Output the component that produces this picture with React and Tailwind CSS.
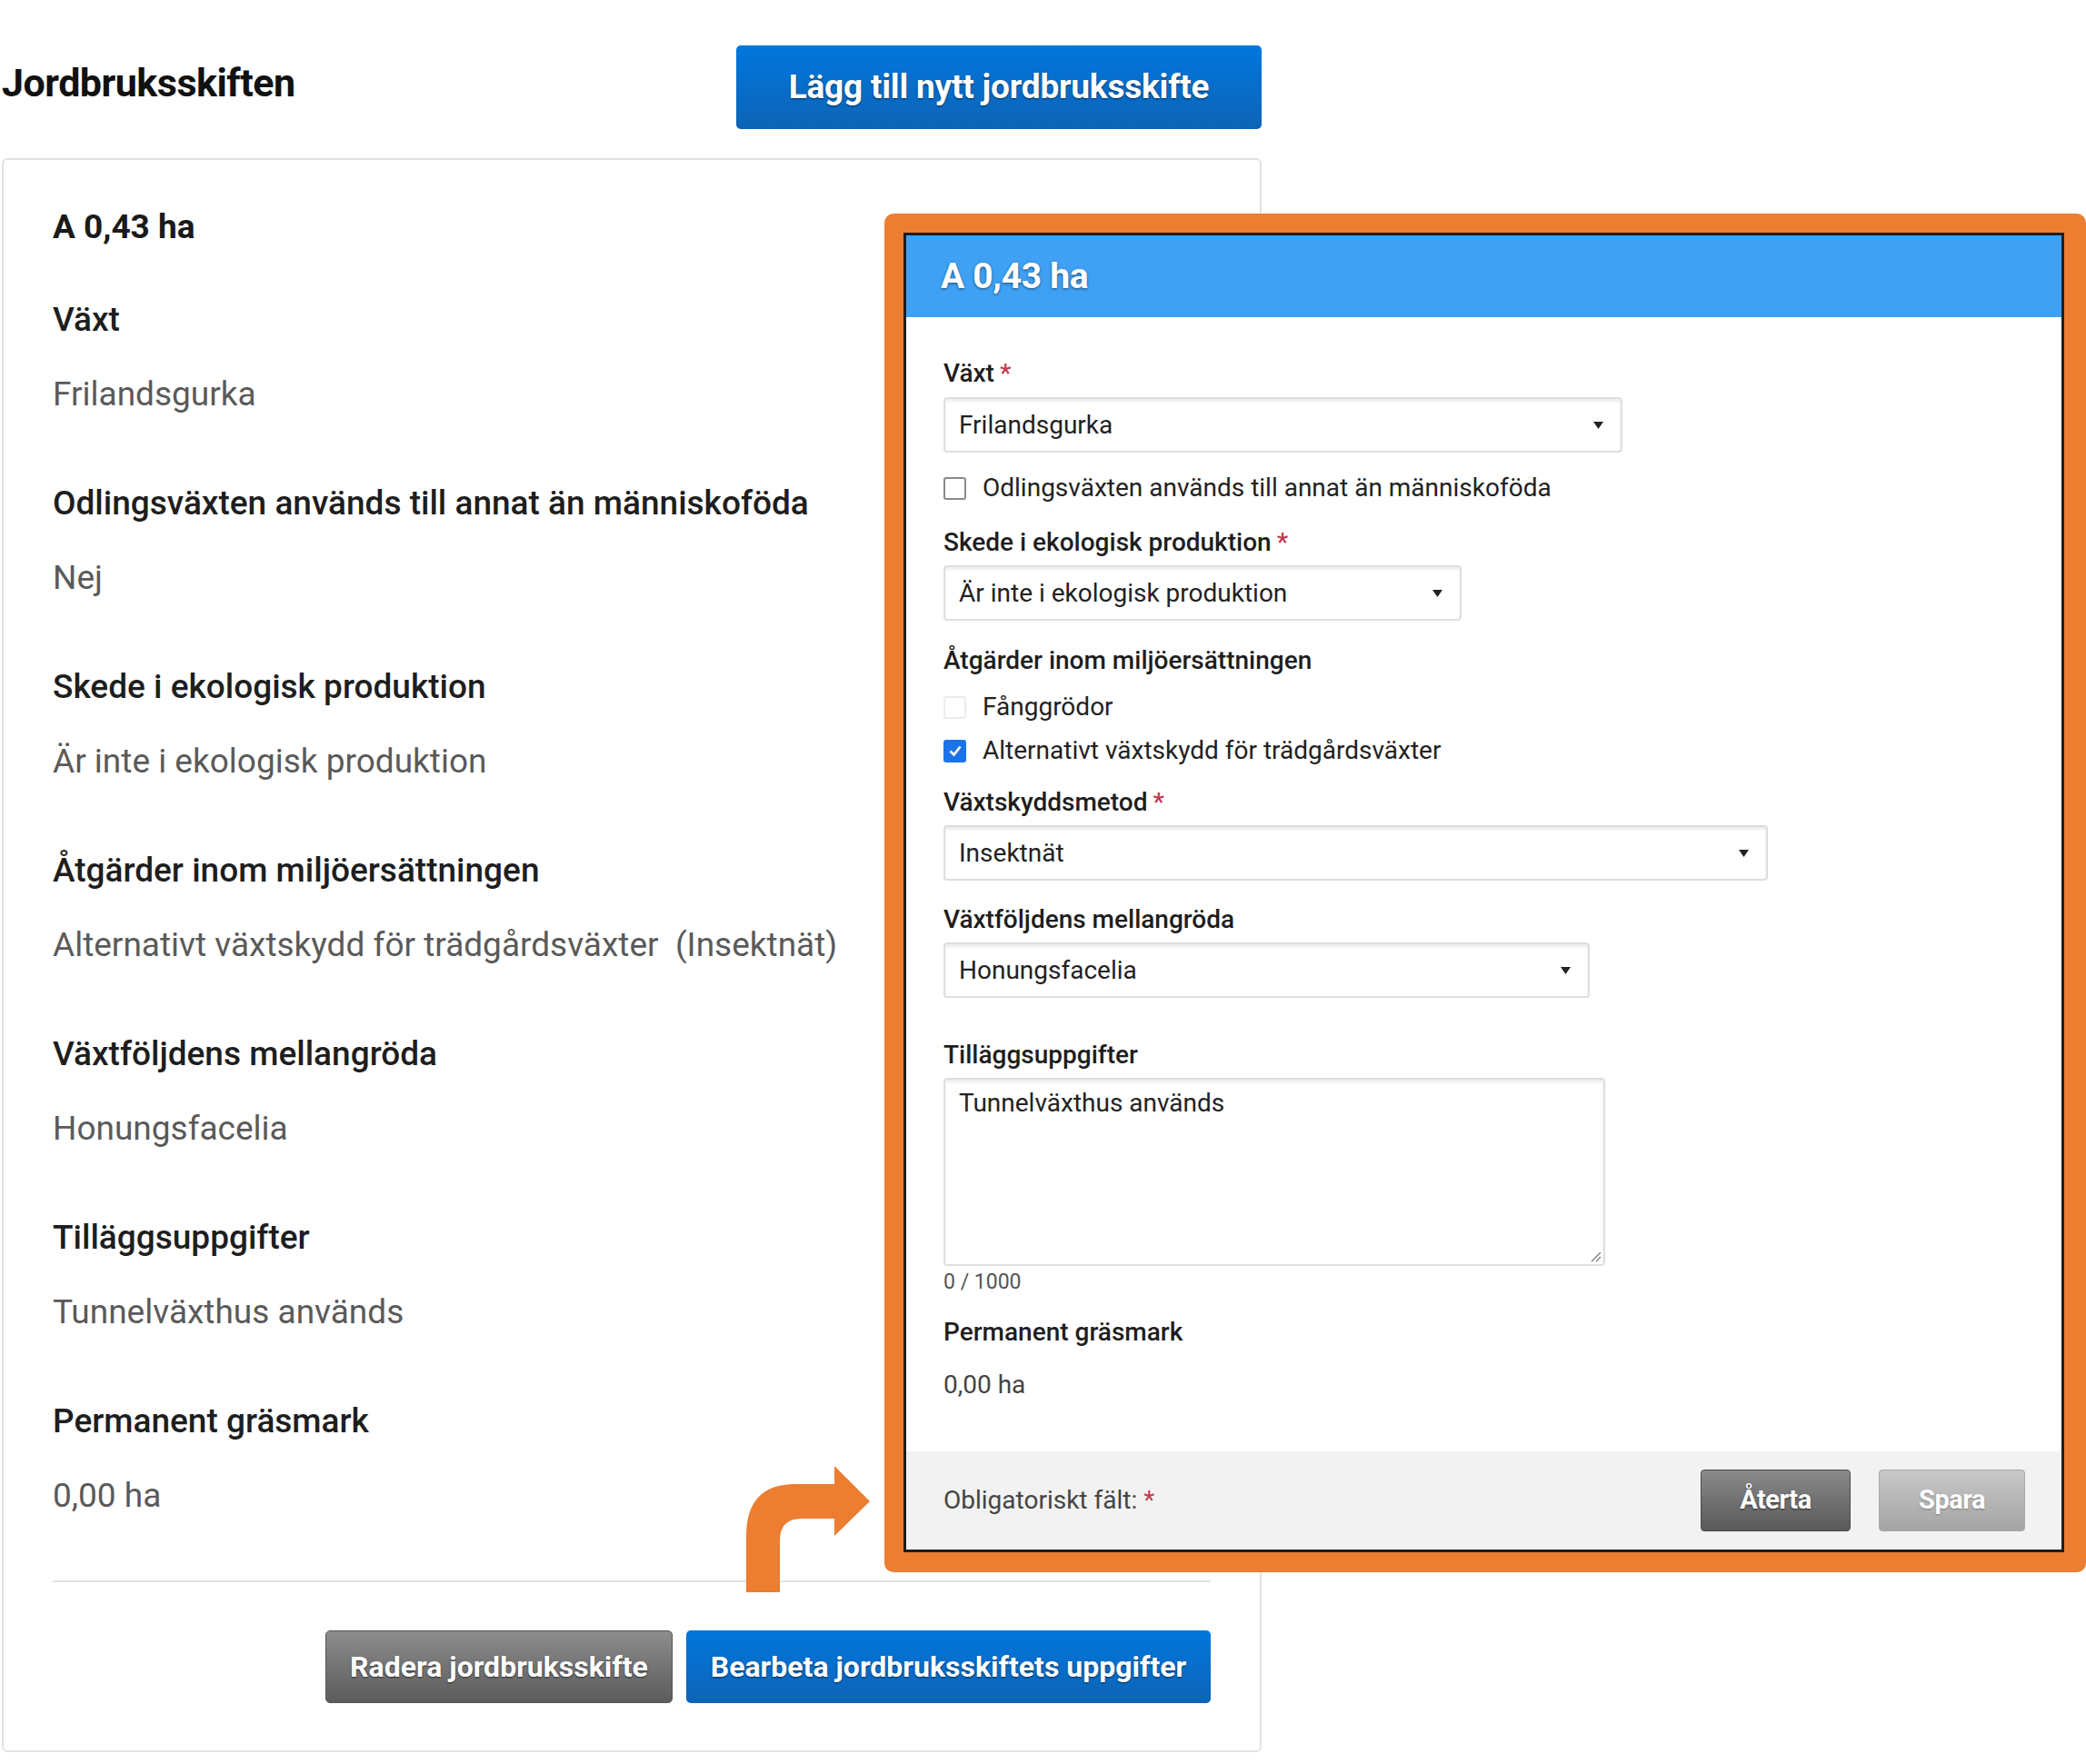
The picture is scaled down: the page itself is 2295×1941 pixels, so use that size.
import React from 'react'

const sections = [
  { label: 'Växt', value: 'Frilandsgurka' },
  { label: 'Odlingsväxten används till annat än människoföda', value: 'Nej' },
  { label: 'Skede i ekologisk produktion', value: 'Är inte i ekologisk produktion' },
  { label: 'Åtgärder inom miljöersättningen', value: 'Alternativt växtskydd för trädgårdsväxter\u00a0 (Insektnät)' },
  { label: 'Växtföljdens mellangröda', value: 'Honungsfacelia' },
  { label: 'Tilläggsuppgifter', value: 'Tunnelväxthus används' },
  { label: 'Permanent gräsmark', value: '0,00 ha' },
]

function Caret() {
  return (
    <svg width="11" height="8" viewBox="0 0 11 8" className="shrink-0">
      <path d="M0 0 L11 0 L5.5 8 Z" fill="#222" />
    </svg>
  )
}

function Select({ value, className }) {
  return (
    <div className={`flex h-[61px] items-center justify-between rounded-[4px] border-2 border-[#dedede] pl-[15px] pr-[19px] text-[28px] text-[#222] shadow-[inset_0_3px_3px_rgba(0,0,0,0.07)] ${className}`}>
      <span>{value}</span>
      <Caret />
    </div>
  )
}

function Label({ children, required, className = '' }) {
  return (
    <div className={`text-[28px] font-medium leading-[32px] text-[#1e1e1e] ${className}`}>
      {children}
      {required && <span className="ml-[6px] text-[#c0394f]">*</span>}
    </div>
  )
}

function Checkbox({ checked, disabled, label, className = '' }) {
  return (
    <div className={`flex h-[32px] items-center gap-[18px] ${className}`}>
      {checked ? (
        <div className="flex h-[25px] w-[25px] items-center justify-center rounded-[3px] bg-[#1a73e8]">
          <svg width="16" height="16" viewBox="0 0 16 16">
            <path d="M2.5 8.5 L6.5 12.5 L13.5 3.5" stroke="white" strokeWidth="2.6" fill="none" />
          </svg>
        </div>
      ) : (
        <div className={`h-[25px] w-[25px] rounded-[3px] border-2 ${disabled ? 'border-[#ececec]' : 'border-[#8a8a8a]'}`} />
      )}
      <span className="text-[28px] text-[#222]">{label}</span>
    </div>
  )
}

export default function App() {
  return (
    <div className="relative h-[1941px] w-[2295px] overflow-hidden bg-white font-['Roboto',sans-serif]">
      {/* vänster kolumn */}
      <div className="w-[1388px] pl-[2px]">
        <div className="flex items-center justify-between pt-[50px]">
          <h1 className="-mt-[9px] text-[43px] font-bold tracking-[-0.5px] text-[#111]">Jordbruksskiften</h1>
          <button className="h-[92px] w-[578px] rounded-[5px] bg-linear-to-b from-[#0077de] to-[#0c64b6] text-[37px] font-bold tracking-[-0.2px] text-white [text-shadow:0_1px_2px_rgba(0,0,0,0.6)]">
            Lägg till nytt jordbruksskifte
          </button>
        </div>

        <div className="mt-[32px] h-[1754px] w-[1386px] rounded-[6px] border-2 border-[#e3e3e3] px-[54px] pt-[53px]">
          <div className="text-[37px] font-bold leading-[42px] text-[#1a1a1a]">A 0,43 ha</div>
          {sections.map((s, i) => (
            <div key={i} className={i === 0 ? 'mt-[60px]' : 'mt-[78px]'}>
              <div className="text-[37px] font-medium leading-[42px] text-[#1e1e1e]">{s.label}</div>
              <div className="mt-[40px] text-[37px] leading-[42px] text-[#5a5a5a]">{s.value}</div>
            </div>
          ))}
          <div className="mt-[72px] h-[2px] bg-[#e2e2e2]" />
          <div className="mt-[53px] flex justify-end gap-[15px]">
            <button className="h-[80px] w-[382px] rounded-[5px] border border-[#555] bg-linear-to-b from-[#8d8d8d] to-[#5c5c5c] text-[32px] font-bold text-white [text-shadow:0_1px_2px_rgba(0,0,0,0.6)]">
              Radera jordbruksskifte
            </button>
            <button className="h-[80px] w-[577px] rounded-[5px] bg-linear-to-b from-[#0077de] to-[#0c64b6] text-[32px] font-bold text-white [text-shadow:0_1px_2px_rgba(0,0,0,0.6)]">
              Bearbeta jordbruksskiftets uppgifter
            </button>
          </div>
        </div>
      </div>

      {/* pil */}
      <svg className="absolute left-[800px] top-[1600px]" width="160" height="155" viewBox="0 0 160 155">
        <path d="M21 152 L21 90 Q21 33 75 33 L118 33 L118 13 L157 52 L118 90 L118 71 L82 71 Q58 71 58 95 L58 152 Z" fill="#ed7d31" />
      </svg>

      {/* redigeringsdialog */}
      <div className="absolute left-[973px] top-[235px] h-[1495px] w-[1322px] rounded-[10px] bg-[#ed7d31] pb-[22px] pl-[21px] pr-[24px] pt-[21px]">
        <div className="flex h-full flex-col border-[3px] border-[#1e1e1e] bg-white">
          <div className="flex h-[90px] shrink-0 items-center bg-[#3fa1f4] pl-[38px] text-[39px] font-bold tracking-[-0.3px] text-white [text-shadow:0_1px_3px_rgba(0,0,0,0.55)]">
            A 0,43 ha
          </div>
          <div className="flex-1 pl-[41px] pt-[46px]">
            <Label required>Växt</Label>
            <Select value="Frilandsgurka" className="mt-[10px] w-[747px]" />
            <Checkbox label="Odlingsväxten används till annat än människoföda" className="mt-[23px]" />
            <Label required className="mt-[28px]">Skede i ekologisk produktion</Label>
            <Select value="Är inte i ekologisk produktion" className="mt-[9px] w-[570px]" />
            <Label className="mt-[28px]">Åtgärder inom miljöersättningen</Label>
            <Checkbox disabled label="Fånggrödor" className="mt-[19px]" />
            <Checkbox checked label="Alternativt växtskydd för trädgårdsväxter" className="mt-[16px]" />
            <Label required className="mt-[25px]">Växtskyddsmetod</Label>
            <Select value="Insektnät" className="mt-[9px] w-[907px]" />
            <Label className="mt-[27px]">Växtföljdens mellangröda</Label>
            <Select value="Honungsfacelia" className="mt-[9px] w-[711px]" />
            <Label className="mt-[47px]">Tilläggsuppgifter</Label>
            <div className="relative mt-[9px] h-[207px] w-[728px] rounded-[4px] border-2 border-[#dedede] px-[15px] pt-[5px] text-[28px] text-[#222] shadow-[inset_0_3px_3px_rgba(0,0,0,0.07)]">
              Tunnelväxthus används
              <svg className="absolute bottom-[2px] right-[2px]" width="14" height="14" viewBox="0 0 14 14">
                <path d="M13 3 L3 13 M13 8 L8 13" stroke="#777" strokeWidth="1.2" />
              </svg>
            </div>
            <div className="mt-[4px] text-[23px] leading-[28px] text-[#555]">0 / 1000</div>
            <Label className="mt-[25px]">Permanent gräsmark</Label>
            <div className="mt-[26px] text-[28px] leading-[32px] text-[#444]">0,00 ha</div>
          </div>
          <div className="flex h-[108px] shrink-0 items-center justify-between bg-[#f2f2f2] pl-[41px] pr-[40px]">
            <div className="text-[28px] text-[#444]">
              Obligatoriskt fält: <span className="text-[#c0394f]">*</span>
            </div>
            <div className="flex gap-[31px]">
              <button className="h-[68px] w-[165px] rounded-[4px] border border-[#4a4a4a] bg-linear-to-b from-[#8a8a8a] to-[#5a5a5a] text-[29px] font-bold tracking-[-0.5px] text-white [text-shadow:0_1px_2px_rgba(0,0,0,0.6)]">
                Återta
              </button>
              <button className="h-[68px] w-[161px] rounded-[4px] border border-[#aaa] bg-linear-to-b from-[#c8c8c8] to-[#a4a4a4] text-[29px] font-bold tracking-[-0.5px] text-white [text-shadow:0_1px_2px_rgba(0,0,0,0.3)]">
                Spara
              </button>
            </div>
          </div>
        </div>
      </div>
    </div>
  )
}
